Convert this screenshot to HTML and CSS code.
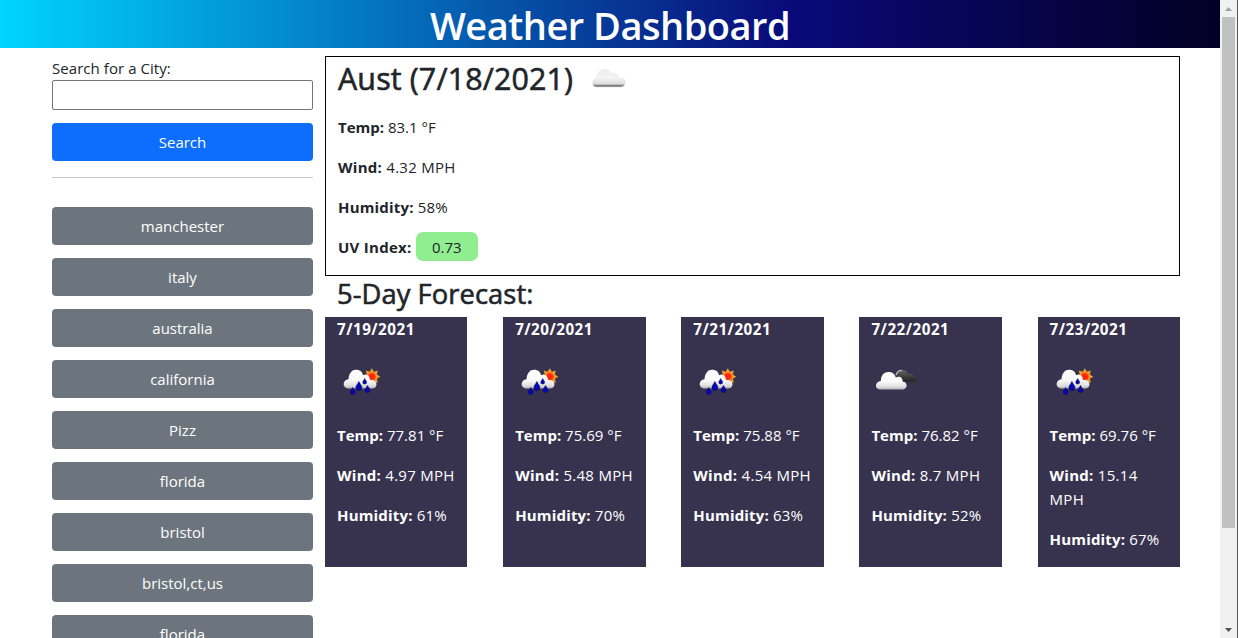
FILE: index.html
```html
<!DOCTYPE html>
<html lang="en">
<head>
<meta charset="utf-8">
<title>Weather Dashboard</title>
<link rel="stylesheet" href="styles.css">
</head>
<body>
<svg class="defs" aria-hidden="true">
  <defs>
    <linearGradient id="cloudFill" x1="0" y1="0" x2="0" y2="1">
      <stop offset="0" stop-color="#fff"/><stop offset=".55" stop-color="#fafafa"/><stop offset=".85" stop-color="#dedede"/><stop offset="1" stop-color="#b0b0b0"/>
    </linearGradient>
    <linearGradient id="dayCloud" x1="0" y1="0" x2="0" y2="1">
      <stop offset="0" stop-color="#eee"/><stop offset=".45" stop-color="#f4f4f4"/><stop offset=".83" stop-color="#dedede"/><stop offset=".9" stop-color="#888"/><stop offset="1" stop-color="#777"/>
    </linearGradient>
    <linearGradient id="darkCloud" x1="0" y1="0" x2="0" y2="1">
      <stop offset="0" stop-color="#666"/><stop offset=".5" stop-color="#444"/><stop offset="1" stop-color="#222"/>
    </linearGradient>
    <radialGradient id="sunFill"><stop offset="0" stop-color="#ff1a00"/><stop offset=".6" stop-color="#ff3010"/><stop offset="1" stop-color="#ff8a20"/></radialGradient>
    <symbol id="rain" viewBox="0 0 50 50">
      <path fill="#f0a030" transform="translate(34.800 19.700)" d="M8.500 0L5 2.100 6.100 6.100 2.100 5 0 8.500-2.100 5-6.100 6.100-5 2.100-8.500 0-5-2.100-6.100-6.100-2.100-5 0-8.500 2.100-5 6.100-6.100 5-2.100z"/>
      <circle cx="34.800" cy="19.700" r="4.700" fill="url(#sunFill)"/>
      <path fill="url(#cloudFill)" d="M10.500 31.500C5 30 5.500 23 11.500 22.200 12 16 15 12.800 19 12.800c4 0 6.500 2.200 7 5.500 4-2 6.500.2 7 4.700 3.500-.5 6.500 1.500 6.500 4.200 0 2.800-2 4.300-4.500 4.300z"/>
      <g fill="#0808b0" stroke="#000060" stroke-width=".5">
        <path d="M15.700 30.500c1 2 2.400 3.200 2.400 4.700a2.400 2.400 0 0 1-4.800 0c0-1.500 1.400-2.700 2.400-4.700z"/>
        <path d="M21.900 24.500c1.100 2.500 3 4.100 3 6a3 3 0 0 1-6 0c0-1.900 1.900-3.500 3-6z"/>
        <path d="M27.700 21.500c.7 1.700 1.900 2.500 1.900 3.700a1.900 1.900 0 0 1-3.800 0c0-1.200 1.200-2 1.900-3.700z"/>
        <path d="M30.500 28.500c1 2 2.400 3.200 2.400 4.700a2.400 2.400 0 0 1-4.800 0c0-1.500 1.400-2.700 2.400-4.700z"/>
      </g>
    </symbol>
    <symbol id="clouds" viewBox="0 0 50 50">
      <path fill="url(#darkCloud)" d="M24.500 20c.2-5 3-7 6.500-7 3.300 0 5.500 1.500 6.100 4 3.400-1 5.900.7 5.900 2.800 3.500.5 4 4.200.5 4.700H30z"/>
      <path fill="none" stroke="#b8b8b8" stroke-width="1.300" d="M25 18c1-3.500 3.300-4.800 6-4.700"/>
      <path fill="url(#cloudFill)" d="M8.500 32.500C3.200 31.300 4 24.500 9.800 23.900 10.200 18 13 15 17.500 15c4 0 6.500 2 7.300 5.500 4.200-1.800 6.800.3 7 4.300 4.500-.2 5.500 6.700.5 7.700z"/>
    </symbol>
    <symbol id="cloud" viewBox="0 0 50 50">
      <path fill="url(#dayCloud)" stroke="#d8d8d8" stroke-width=".4" d="M12 33c-4.800-.5-4.300-7.800.8-8.800.3-5 2.900-8.700 7.700-8.700 3.800 0 6.200 2 7 4.500 4-1.500 6.700 0 6.900 4 4.800-.5 7.200 1.500 6.700 4.700-.3 2.800-1.900 4.300-4.300 4.300z"/>
    </symbol>
  </defs>
</svg>

<div class="window">
  <div class="page">
    <header class="banner"><h1 class="banner-title">Weather Dashboard</h1></header>
    <div class="row">
      <aside class="sidebar">
        <label class="search-label" for="city">Search for a City:</label>
        <input class="search-input" id="city" type="text">
        <button class="btn btn-primary">Search</button>
        <hr class="divider">
        <div class="history">
          <button class="btn">manchester</button>
          <button class="btn">italy</button>
          <button class="btn">australia</button>
          <button class="btn">california</button>
          <button class="btn">Pizz</button>
          <button class="btn">florida</button>
          <button class="btn">bristol</button>
          <button class="btn">bristol,ct,us</button>
          <button class="btn">florida</button>
        </div>
      </aside>
      <main class="content">
        <section class="today">
          <h2 class="today-title"><span class="today-name">Aust (7/18/2021)</span><svg class="icon"><use href="#cloud"/></svg></h2>
          <p class="stat"><b>Temp:</b> 83.1 °F</p>
          <p class="stat wind"><b>Wind:</b> 4.32 MPH</p>
          <p class="stat humidity"><b>Humidity:</b> 58%</p>
          <p class="stat wind"><b>UV Index:</b> <span class="uv">0.73</span></p>
        </section>
        <h3 class="forecast-title">5-Day Forecast:</h3>
        <section class="forecast">
          <article class="card"><b class="date">7/19/2021</b><svg class="icon"><use href="#rain"/></svg><p class="stat"><b>Temp:</b> 77.81 °F</p><p class="stat wind"><b>Wind:</b> 4.97 MPH</p><p class="stat humidity"><b>Humidity:</b> 61%</p></article>
          <article class="card"><b class="date">7/20/2021</b><svg class="icon"><use href="#rain"/></svg><p class="stat"><b>Temp:</b> 75.69 °F</p><p class="stat wind"><b>Wind:</b> 5.48 MPH</p><p class="stat humidity"><b>Humidity:</b> 70%</p></article>
          <article class="card"><b class="date">7/21/2021</b><svg class="icon"><use href="#rain"/></svg><p class="stat"><b>Temp:</b> 75.88 °F</p><p class="stat wind"><b>Wind:</b> 4.54 MPH</p><p class="stat humidity"><b>Humidity:</b> 63%</p></article>
          <article class="card"><b class="date">7/22/2021</b><svg class="icon"><use href="#clouds"/></svg><p class="stat"><b>Temp:</b> 76.82 °F</p><p class="stat wind"><b>Wind:</b> 8.7 MPH</p><p class="stat humidity"><b>Humidity:</b> 52%</p></article>
          <article class="card"><b class="date">7/23/2021</b><svg class="icon"><use href="#rain"/></svg><p class="stat"><b>Temp:</b> 69.76 °F</p><p class="stat wind"><b>Wind:</b> 15.14<br>MPH</p><p class="stat humidity"><b>Humidity:</b> 67%</p></article>
        </section>
      </main>
    </div>
  </div>
  <div class="scrollbar">
    <svg class="arrow" viewBox="0 0 17 17"><path fill="#a3a3a3" d="M5 11h7L8.500 7z"/></svg>
    <div class="thumb"></div>
    <svg class="arrow" viewBox="0 0 17 17"><path fill="#505050" d="M5 7h7l-3.500 4z"/></svg>
  </div>
</div>
</body>
</html>
```
FILE: styles.css
```css
* { box-sizing: border-box; }
body {
  margin: 0;
  height: 638px;
  overflow: hidden;
  background: #fff;
  color: #212529;
  font: 400 15px/24px "Open Sans", "Noto Sans", sans-serif;
}
.defs { display: block; width: 0; height: 0; }
.window { display: flex; height: 638px; }
.page { flex: 1; height: 638px; overflow: hidden; }
.banner {
  height: 48px;
  background: linear-gradient(270deg, rgb(2, 0, 36) 0%, rgb(9, 9, 121) 35%, rgb(0, 212, 255) 100%);
}
.banner-title {
  margin: 0;
  color: #fff;
  font-size: 38px;
  font-weight: 600;
  letter-spacing: -0.5px;
  line-height: 51px;
  text-align: center;
}
.row { display: flex; width: 1140px; margin: 8px auto 0; }
.sidebar { width: 285px; padding: 0 12px; display: flex; flex-direction: column; }
.search-label { height: 24px; line-height: 25px; letter-spacing: 0.06px; }
.search-input {
  width: 100%;
  height: 30px;
  border: 1px solid #767676;
  border-radius: 2px;
  background: #fff;
}
.btn {
  display: block;
  flex: none;
  width: 100%;
  height: 38px;
  padding: 0;
  border: 0;
  border-radius: 4px;
  background: #6c757d;
  color: #fff;
  font: inherit;
  line-height: 39px;
  text-align: center;
}
.btn-primary { margin-top: 13px; background: #0d6efd; }
.divider { width: 100%; height: 1px; margin: 16px 0 29px; border: 0; background: #c8c9ca; }
.history { display: flex; flex-direction: column; gap: 13px; }
.content { width: 855px; }
.today { height: 220px; border: 1px solid #000; padding: 0 12px; }
.today-title {
  display: flex;
  align-items: center;
  gap: 10.500px;
  height: 43px;
  margin: 0 0 15px;
  font-size: 30.400px;
  font-weight: 500;
  letter-spacing: 0.14px;
  -webkit-text-stroke: 0.6px currentColor;
}
.today-title .icon { -webkit-text-stroke: 0; }
.icon { display: block; flex: none; width: 50px; height: 50px; }
.stat { margin: 0 0 16px; }
.wind { letter-spacing: 0.28px; }
.humidity { letter-spacing: 0.18px; }
.uv {
  display: inline-block;
  width: 62px;
  height: 29px;
  margin: -3px 0;
  border-radius: 7px;
  background: #90ee90;
  line-height: 30px;
  letter-spacing: 0;
  text-align: center;
}
.forecast-title {
  height: 41px;
  margin: 0;
  padding-left: 12px;
  font-size: 27.300px;
  font-weight: 500;
  letter-spacing: 0.08px;
  line-height: 36px;
  -webkit-text-stroke: 0.6px currentColor;
}
.forecast { display: flex; justify-content: space-between; }
.card {
  width: 142.400px;
  height: 250px;
  padding: 0 12px;
  background: #37334f;
  color: #fff;
  white-space: nowrap;
}
.date { display: block; height: 40px; line-height: 25px; font-size: 15.200px; letter-spacing: 0.5px; }
.card .icon { margin-bottom: 16px; }
.scrollbar {
  display: flex;
  flex-direction: column;
  justify-content: space-between;
  width: 18px;
  background: #f1f1f1;
  border-right: 1px solid #555;
}
.arrow { display: block; flex: none; width: 17px; height: 17px; }
.thumb { width: 13px; height: 511px; margin: 0 0 auto 2px; background: #c1c1c1; }
```
